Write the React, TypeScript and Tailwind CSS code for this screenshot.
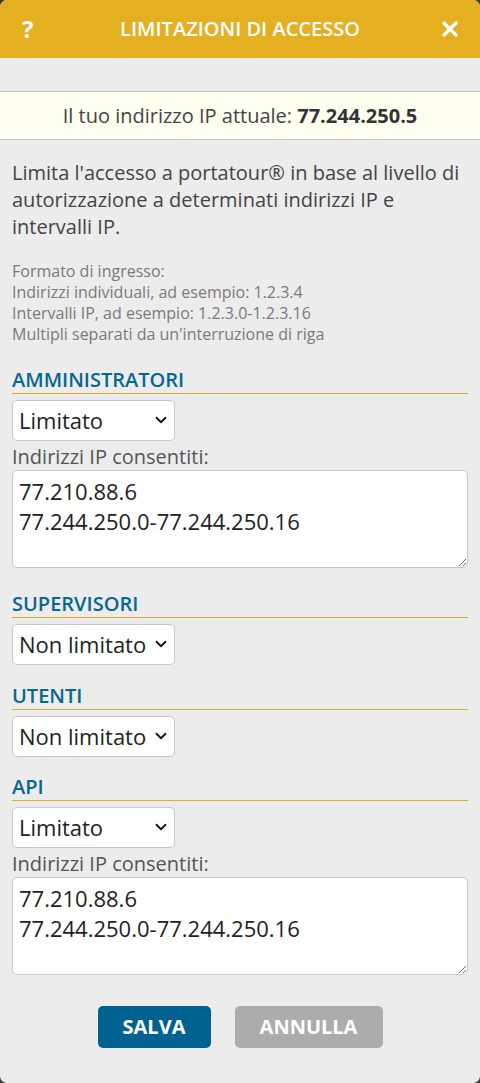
import { ChevronDown, X } from "lucide-react";

const font = { fontFamily: '"Open Sans", "Noto Sans", sans-serif' };

function Select({ value }: { value: string }) {
  return (
    <div className="relative w-[163px] h-[41px]">
      <select
        defaultValue={value}
        className="appearance-none w-full h-full bg-white border border-[#c8c8c8] rounded-[5px] pl-[6px] pr-6 text-[22px] text-[#222] outline-none"
        style={font}
      >
        <option>Limitato</option>
        <option>Non limitato</option>
      </select>
      <ChevronDown
        className="absolute right-[5px] top-[11px] w-[18px] h-[18px] text-[#111] pointer-events-none"
        strokeWidth={2.4}
      />
    </div>
  );
}

function Heading({ children }: { children: string }) {
  return (
    <div className="border-b border-[#e2ac2a] mb-[6px]">
      <h2 className="text-[20px] leading-[27px] font-semibold text-[#06678f]">{children}</h2>
    </div>
  );
}

function IpBox() {
  return (
    <>
      <div className="text-[20px] leading-[26px] text-[#555] mt-[3px]">Indirizzi IP consentiti:</div>
      <textarea
        defaultValue={"77.210.88.6\n77.244.250.0-77.244.250.16"}
        className="block w-full h-[98px] bg-white border border-[#c8c8c8] rounded-[5px] px-[6px] pt-[5px] text-[22px] leading-[30px] text-[#222] outline-none"
        style={font}
      />
    </>
  );
}

export default function App() {
  return (
    <div className="bg-[#3a3a3a] min-h-[1083px]" style={font}>
      <div className="bg-[#ececec] rounded-[7px] overflow-hidden h-[1083px] flex flex-col">
        {/* Header */}
        <div className="bg-[#e5af22] h-[58px] flex items-center justify-between px-[22px] shrink-0">
          <span className="text-white text-[24px] font-bold w-[20px]">?</span>
          <h1 className="text-white text-[20px] font-semibold">LIMITAZIONI DI ACCESSO</h1>
          <X className="w-[24px] h-[24px] text-white -mr-[4px]" strokeWidth={3.4} />
        </div>

        <div className="h-[33px] shrink-0" />

        {/* Current IP */}
        <div className="bg-[#fffff0] border-y border-[#c6c6c6] h-[49px] flex items-center justify-center text-[20px] text-[#444]">
          <span>
            Il tuo indirizzo IP attuale: <b className="font-bold text-[#333]">77.244.250.5</b>
          </span>
        </div>

        <div className="px-[12px] pt-[19px]">
          <p className="text-[20px] leading-[27px] text-[#444]">
            Limita l'accesso a portatour® in base al livello di autorizzazione a determinati indirizzi IP e
            intervalli IP.
          </p>
          <p className="mt-[21px] text-[16px] leading-[21px] text-[#7a7a7a]">
            Formato di ingresso:
            <br />
            Indirizzi individuali, ad esempio: 1.2.3.4
            <br />
            Intervalli IP, ad esempio: 1.2.3.0-1.2.3.16
            <br />
            Multipli separati da un'interruzione di riga
          </p>

          <div className="mt-[21px]">
            <Heading>AMMINISTRATORI</Heading>
            <Select value="Limitato" />
            <IpBox />
          </div>

          <div className="mt-[22px]">
            <Heading>SUPERVISORI</Heading>
            <Select value="Non limitato" />
          </div>

          <div className="mt-[17px]">
            <Heading>UTENTI</Heading>
            <Select value="Non limitato" />
          </div>

          <div className="mt-[16px]">
            <Heading>API</Heading>
            <Select value="Limitato" />
            <IpBox />
          </div>

          <div className="flex justify-center gap-[24px] mt-[31px]">
            <button className="bg-[#00628f] text-white font-bold text-[20px] h-[42px] w-[113px] rounded-[5px]">
              SALVA
            </button>
            <button className="bg-[#acacac] text-white font-bold text-[20px] h-[42px] w-[148px] rounded-[5px]">
              ANNULLA
            </button>
          </div>
        </div>
      </div>
    </div>
  );
}
